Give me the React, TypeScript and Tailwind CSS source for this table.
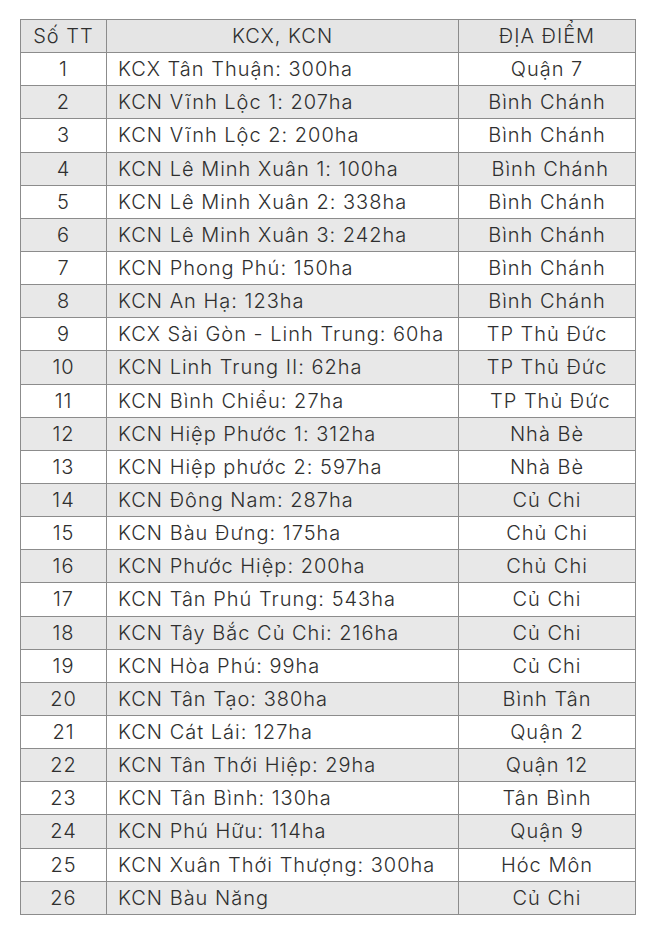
const rows: [string, string, string][] = [
  ["1", "KCX Tân Thuận: 300ha", "Quận 7"],
  ["2", "KCN Vĩnh Lộc 1: 207ha", "Bình Chánh"],
  ["3", "KCN Vĩnh Lộc 2: 200ha", "Bình Chánh"],
  ["4", "KCN Lê Minh Xuân 1: 100ha", " Bình Chánh"],
  ["5", "KCN Lê Minh Xuân 2: 338ha", "Bình Chánh"],
  ["6", "KCN Lê Minh Xuân 3: 242ha", "Bình Chánh"],
  ["7", "KCN Phong Phú: 150ha", "Bình Chánh"],
  ["8", "KCN An Hạ: 123ha", "Bình Chánh"],
  ["9", "KCX Sài Gòn - Linh Trung: 60ha", "TP Thủ Đức"],
  ["10", "KCN Linh Trung II: 62ha", "TP Thủ Đức"],
  ["11", "KCN Bình Chiểu: 27ha", " TP Thủ Đức"],
  ["12", "KCN Hiệp Phước 1: 312ha", "Nhà Bè"],
  ["13", "KCN Hiệp phước 2: 597ha", "Nhà Bè"],
  ["14", "KCN Đông Nam: 287ha", "Củ Chi"],
  ["15", "KCN Bàu Đưng: 175ha", "Chủ Chi"],
  ["16", "KCN Phước Hiệp: 200ha", "Chủ Chi"],
  ["17", "KCN Tân Phú Trung: 543ha", "Củ Chi"],
  ["18", "KCN Tây Bắc Củ Chi: 216ha", "Củ Chi"],
  ["19", "KCN Hòa Phú: 99ha", "Củ Chi"],
  ["20", "KCN Tân Tạo: 380ha", "Bình Tân"],
  ["21", "KCN Cát Lái: 127ha", "Quận 2"],
  ["22", "KCN Tân Thới Hiệp: 29ha", "Quận 12"],
  ["23", "KCN Tân Bình: 130ha", "Tân Bình"],
  ["24", "KCN Phú Hữu: 114ha", "Quận 9"],
  ["25", "KCN Xuân Thới Thượng: 300ha", "Hóc Môn"],
  ["26", "KCN Bàu Năng", "Củ Chi"],
];

const cell = "border border-[#8c8c8c] p-0 leading-none";

export default function App() {
  return (
    <div className="w-[650px] h-[927px] bg-white pt-[19px] pl-[20px] font-['Inter','Liberation_Sans',sans-serif] font-light text-[20px] tracking-[1px] text-[#2f2f2f]">
      <table className="w-[615px] table-fixed border-collapse">
        <colgroup>
          <col className="w-[86px]" />
          <col className="w-[352px]" />
          <col className="w-[177px]" />
        </colgroup>
        <thead>
          <tr className="h-[33.15px] bg-[#e5e5e5]">
            <th className={`${cell} font-light text-center`}>Số TT</th>
            <th className={`${cell} font-light text-center`}>KCX, KCN</th>
            <th className={`${cell} font-light text-center`}>ĐỊA ĐIỂM</th>
          </tr>
        </thead>
        <tbody>
          {rows.map(([no, name, place], i) => (
            <tr key={no} className={`h-[33.15px] ${i % 2 === 1 ? "bg-[#e8e8e8]" : "bg-white"}`}>
              <td className={`${cell} text-center`}>{no}</td>
              <td className={`${cell} pl-[11px] whitespace-nowrap`}>{name}</td>
              <td className={`${cell} text-center whitespace-pre`}>{place}</td>
            </tr>
          ))}
        </tbody>
      </table>
    </div>
  );
}
